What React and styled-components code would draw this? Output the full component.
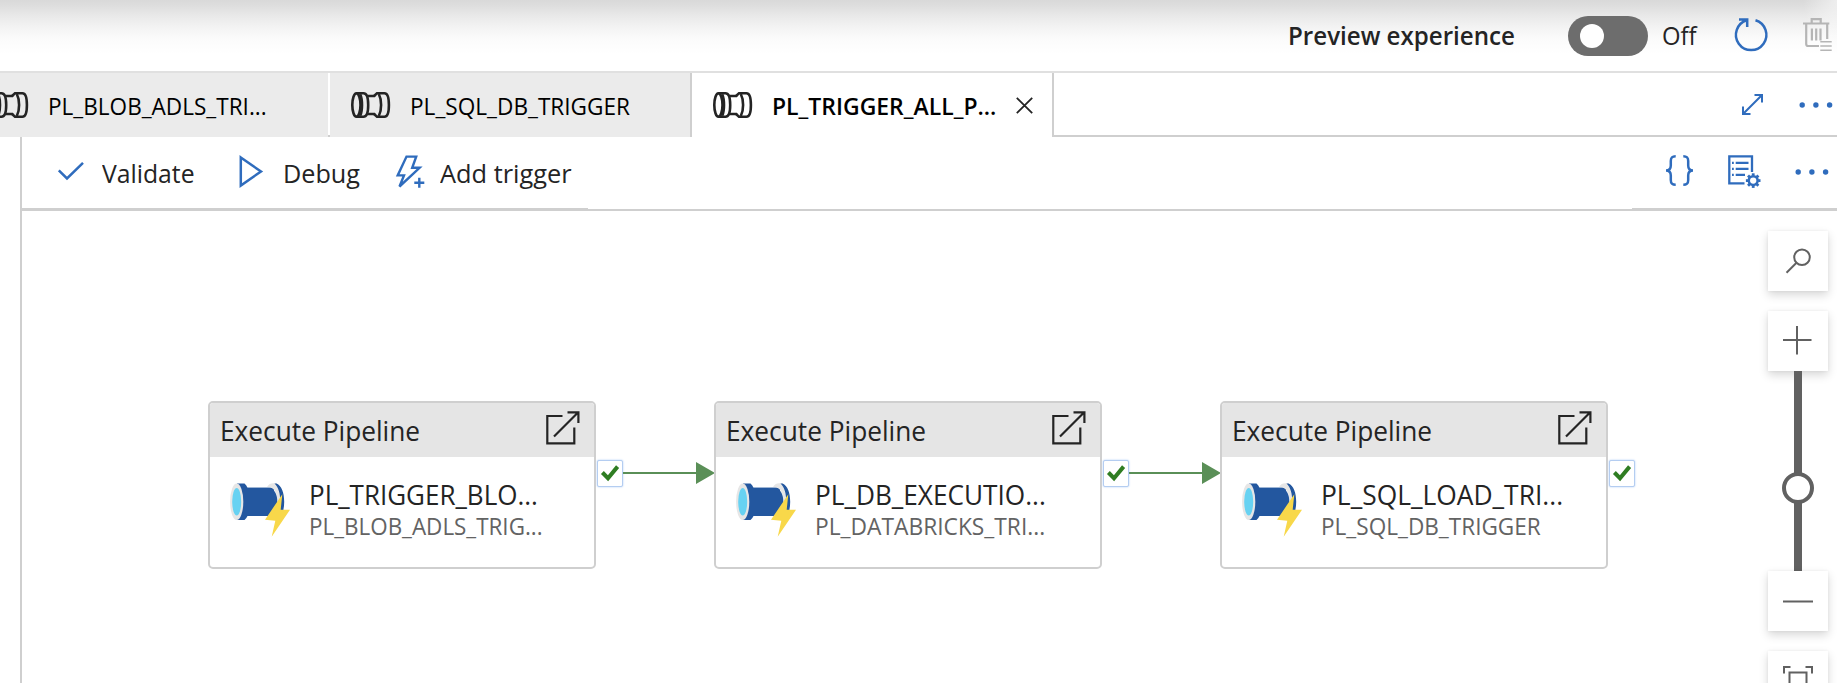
import React from "react";
import styled, { createGlobalStyle } from "styled-components";

const LINE = "#cfcfcf";
const BLUE = "#2f6cbd";
const INK = "#242424";
const GREY = "#616161";

const GlobalStyle = createGlobalStyle`
  *, *::before, *::after { box-sizing: border-box; }
  body { margin: 0; background: #fff; overflow: hidden; }
`;

const Page = styled.div`
  display: flex;
  flex-direction: column;
  width: 1837px;
  height: 683px;
  overflow: hidden;
  background: #fff;
  color: ${INK};
  font-family: "Open Sans", "Noto Sans", sans-serif;
`;

/* Text condensed horizontally; the box keeps an explicit width for layout. */
const Label = styled.span`
  display: block;
  flex: none;
  width: ${(p) => p.$width}px;
  margin: ${(p) => p.$m || 0};
  font-size: ${(p) => p.$size || 25.5}px;
  font-weight: ${(p) => p.$weight || 400};
  color: ${(p) => p.$color || INK};
  line-height: ${(p) => p.$line || 34}px;
  white-space: nowrap;
  transform: scaleX(${(p) => p.$fit || 0.96});
  transform-origin: 0 50%;
`;

const Icon = styled.svg`
  display: block;
  flex: none;
  width: ${(p) => p.$w}px;
  height: ${(p) => p.$h}px;
  margin: ${(p) => p.$m || 0};
  fill: none;
  stroke: ${(p) => p.$color || BLUE};
  stroke-width: ${(p) => p.$stroke || 2.2};
  overflow: visible;
`;

const SolidIcon = styled(Icon)`
  fill: ${(p) => p.$color || BLUE};
  stroke: none;
`;

const TopBar = styled.header`
  flex: none;
  display: flex;
  align-items: center;
  justify-content: flex-end;
  height: 73px;
  padding-right: 5px;
  border-bottom: 2px solid #e0e0e0;
  background:
    radial-gradient(ellipse 34px 44px at 100% 0, rgba(255, 255, 255, 0.55), rgba(255, 255, 255, 0)),
    linear-gradient(#d9d9d9 0, #dedede 6px, #e8e8e8 15px, #f3f3f3 27px, #fbfbfb 39px, #fff 54px);
`;

const Toggle = styled.span`
  flex: none;
  display: flex;
  align-items: center;
  width: 80px;
  height: 40px;
  margin: 1px 13.6px 0 0;
  padding-left: 12px;
  border-radius: 20px;
  background: #6d6d6d;
  &::before {
    content: "";
    width: 24px;
    height: 24px;
    border-radius: 50%;
    background: #fff;
  }
`;

const TabStrip = styled.nav`
  flex: none;
  display: flex;
  height: 64px;
  margin-left: -32px;
`;

const Tab = styled.div`
  flex: none;
  display: flex;
  align-items: center;
  width: 360px;
  padding-left: 21px;
  background: ${(p) => (p.$active ? "#fff" : "#ebebeb")};
`;

const TabDivider = styled.span`
  flex: none;
  width: 2px;
  background: ${(p) => (p.$light ? "#fff" : LINE)};
  border-bottom: 2px solid ${LINE};
`;

const TabActions = styled.div`
  flex: 1;
  display: flex;
  align-items: center;
  justify-content: flex-end;
  padding-right: 4px;
  border-bottom: 2px solid ${LINE};
`;

const Editor = styled.main`
  flex: 1;
  display: flex;
  flex-direction: column;
  margin-left: 20px;
  border-left: 2px solid ${LINE};
`;

const Toolbar = styled.div`
  flex: none;
  display: flex;
  justify-content: space-between;
  height: 74px;
  border-bottom: 2px solid ${LINE};
`;

const ToolGroup = styled.div`
  display: flex;
  align-items: center;
  width: ${(p) => p.$width}px;
  padding-left: ${(p) => p.$pad}px;
  border-bottom: 1px solid ${LINE};
`;

const Canvas = styled.section`
  position: relative;
  flex: 1;
  overflow: hidden;
`;

const Node = styled.div`
  position: absolute;
  left: ${(p) => p.$x}px;
  top: 190px;
  display: flex;
  align-items: flex-start;
`;

const Card = styled.article`
  width: 388px;
  height: 168px;
  overflow: hidden;
  border: 2px solid ${LINE};
  border-radius: 5px;
  background: #fff;
`;

const CardHead = styled.div`
  display: flex;
  justify-content: space-between;
  height: 54px;
  padding: 8px 14.5px 0 10px;
  background: #e5e5e5;
`;

const CardBody = styled.div`
  display: flex;
  padding: 19.5px 0 0 20px;
`;

const CardText = styled.div`
  padding-left: 19.2px;
`;

const Port = styled.span`
  display: flex;
  align-items: center;
  justify-content: center;
  width: 26px;
  height: 27px;
  margin: 58.5px 0 0 1px;
  border: 1.5px solid #b4cdf1;
  border-radius: 2px;
  background: #fff;
  box-shadow: 0 0 2px #a9c8f5;
`;

const ZoomPanel = styled.aside`
  position: absolute;
  top: 20px;
  right: 9px;
  display: flex;
  flex-direction: column;
  align-items: center;
`;

const ZoomButton = styled.button`
  flex: none;
  display: flex;
  align-items: center;
  justify-content: center;
  width: 60px;
  height: 60px;
  margin: 0 0 ${(p) => p.$gap || 0}px;
  padding: 0;
  border: 0;
  background: #fff;
  box-shadow: 0 4px 9px rgba(0, 0, 0, 0.16), 0 0 3px rgba(0, 0, 0, 0.06);
`;

const Track = styled.div`
  flex: none;
  display: flex;
  align-items: center;
  justify-content: center;
  width: 8px;
  height: 200px;
  background: ${GREY};
  &::before {
    content: "";
    flex: none;
    width: 32px;
    height: 32px;
    margin-top: 34px;
    border: 4px solid ${GREY};
    border-radius: 50%;
    background: #fff;
  }
`;

const PipeOutline = () => (
  <Icon $w={39} $h={26} $m="0 20px 0 0" $color={INK} $stroke={2.6} viewBox="0 0 39 26">
    <ellipse cx="5.4" cy="13" rx="4.1" ry="11.7" />
    <path d="M5.3 1.3H12.5C15.8 1.3 17.2 7 17.2 13s-1.4 11.7-4.7 11.7H5.3" />
    <path d="M9.2 2.2c1.2 2.6 1.8 6.4 1.8 10.8s-.6 8.2-1.8 10.8" />
    <path d="M15.6 4H24M15.6 22H24" />
    <path d="M23.5 4.8V3.6L26 1.3H33.5C36.6 1.3 37.9 7 37.9 13s-1.3 11.7-4.4 11.7H26L23.5 22.4V21.2" />
    <path d="M27.8 2c1.5 2.8 2.3 6.6 2.3 11s-.8 8.2-2.3 11" />
  </Icon>
);

const PipeColor = () => (
  <SolidIcon $w={60} $h={54} $m="6.5px 0 0" viewBox="0 0 60 54">
    <path d="M7 .4H14.5Q16.3 1.5 17.5 4.7H44V33H17.5Q16.3 35.8 14.5 36.9H7Z" fill="#23579f" />
    <path d="M37 3.7Q39.5.3 43 .3h3.5C51 3.5 52 10 52 18.7S50 34 46 36.9h-5C45.5 33 47.3 27 47.3 18.7S45 6 40.5 4.6Z" fill="#e6e6e6" />
    <path d="M44.5.4H46.5C51.5 2.5 54.2 9.5 54.2 18.7S51.5 35 46.5 36.9H44.5C48.5 33 50.3 27 50.3 18.7S48.5 4 44.5.4Z" fill="#23579f" />
    <path d="M17 4.7H40.5C45 7 47.3 12 47.3 18.7S45 30 42 33H17Z" fill="#23579f" />
    <ellipse cx="6.7" cy="18.7" rx="6.6" ry="18.3" fill="#e6e6e6" />
    <ellipse cx="6.7" cy="18.7" rx="4.5" ry="13.8" fill="#67d2f2" />
    <path d="M52.3 11.3L50.7 26.7H60L41.7 53.7L45.3 37.7L35 36.7Z" fill="#f8d84a" />
  </SolidIcon>
);

const OpenIcon = () => (
  <Icon $w={34} $h={34} $color={INK} $stroke={2.2} viewBox="0 0 34 34">
    <path d="M16.5 5H1.3V32.4H28.3V16.5M8 25.5L32 1.5M21.5 1.3H32.4V12" />
  </Icon>
);

const Dots = ({ m }) => (
  <SolidIcon $w={34} $h={6} $m={m} viewBox="0 0 34 6">
    <circle cx="3.2" cy="3" r="2.7" />
    <circle cx="16.9" cy="3" r="2.7" />
    <circle cx="30.6" cy="3" r="2.7" />
  </SolidIcon>
);

const Arrow = () => (
  <SolidIcon $w={92} $h={22} $m="61px 0 0" $color="#5a8f57" viewBox="0 0 92 22">
    <path d="M0 10H73V0L92 11L73 22V12H0Z" />
  </SolidIcon>
);

const tabs = [
  { text: "PL_BLOB_ADLS_TRI...", fit: 0.96 },
  { text: "PL_SQL_DB_TRIGGER", fit: 0.962 },
  { text: "PL_TRIGGER_ALL_P...", fit: 0.977, active: true },
];

const nodes = [
  { x: 186, name: "PL_TRIGGER_BLO...", fit: 0.945, sub: "PL_BLOB_ADLS_TRIG...", subFit: 0.954, linked: true },
  { x: 692, name: "PL_DB_EXECUTIO...", fit: 0.952, sub: "PL_DATABRICKS_TRI...", subFit: 0.969, linked: true },
  { x: 1198, name: "PL_SQL_LOAD_TRI...", fit: 0.959, sub: "PL_SQL_DB_TRIGGER", subFit: 0.961 },
];

const gearTeeth = [0, 45, 90, 135, 180, 225, 270, 315];

export default function App() {
  return (
    <Page>
      <GlobalStyle />
      <TopBar>
        <Label $width={280} $m="0 0 1px" $weight={600} $fit={0.946}>Preview experience</Label>
        <Toggle />
        <Label $width={71.4} $m="0 0 1px" $fit={0.935}>Off</Label>
        <Icon $w={36} $h={36} $m="0 34px 2px 0" $stroke={2.5} viewBox="0 0 36 36">
          <path d="M22.5 3.3A15.2 15.2 0 1 1 13.8 3.3M6 2.5H14.2V10" />
        </Icon>
        <Icon $w={29} $h={33} $m="0 0 2px" $color="#b5b5b5" $stroke={2.2} viewBox="0 0 29 33">
          <path d="M0 5.5H26.3M8.7 5V1.2H17.7V5M3.2 5.5V26Q3.2 28 5.2 28H16M24.2 5.5V21" />
          <path d="M8.9 10.5V22.5M13.2 10.5V22.5M17.5 10.5V22.5" />
          <path d="M17.3 23.7H28.7M17.3 28H28.7M17.3 32.2H28.7" strokeWidth="1.6" />
        </Icon>
      </TopBar>

      <TabStrip>
        {tabs.map((t, i) => (
          <React.Fragment key={t.text}>
            <Tab $active={t.active}>
              <PipeOutline />
              <Label
                $width={t.active ? 243.5 : 230}
                $m="2px 0 0"
                $size={23.5}
                $weight={t.active ? 600 : 400}
                $color="#000"
                $fit={t.fit}
              >
                {t.text}
              </Label>
              {t.active && (
                <Icon $w={17} $h={17} $color={INK} $stroke={1.8} viewBox="0 0 17 17">
                  <path d="M.8.8L16.2 16.2M16.2.8L.8 16.2" />
                </Icon>
              )}
            </Tab>
            <TabDivider $light={i === 0} />
          </React.Fragment>
        ))}
        <TabActions>
          <Icon $w={21} $h={21} $m="1px 36px 0 0" $stroke={2} viewBox="0 0 21 21">
            <path d="M1.5 19.5L19.5 1.5M12.5 1H20V8.5M1 12.5V20H8.5" />
          </Icon>
          <Dots m="2px 0 0" />
        </TabActions>
      </TabStrip>

      <Editor>
        <Toolbar>
          <ToolGroup $width={566} $pad={36}>
            <Icon $w={26} $h={18} $m="0 18px 4px 0" $stroke={2.5} viewBox="0 0 26 18">
              <path d="M.8 8.3L9 16.5L25 .8" />
            </Icon>
            <Label $width={137} $fit={0.97}>Validate</Label>
            <Icon $w={24} $h={33} $m="0 19.5px 2px 0" $stroke={2.5} viewBox="0 0 24 33">
              <path d="M1.8 2.5L22 16.5L1.8 30.5Z" />
            </Icon>
            <Label $width={113.5} $fit={0.988}>Debug</Label>
            <Icon $w={29} $h={33} $m="0 15px 2px 0" $stroke={2.4} viewBox="0 0 29 33">
              <path d="M10.5 1.6H20.2L16.2 12.8H23.6L3.5 31.5L8 20.4H1.7Z" />
              <path d="M18.3 27.8H28.3M23.3 22.8V32.8" />
            </Icon>
            <Label $width={140} $fit={0.994}>Add trigger</Label>
          </ToolGroup>
          <ToolGroup $width={205} $pad={33}>
            <Icon $w={29} $h={31} $m="0 33.5px 4px 0" $stroke={2.5} viewBox="0 0 29 31">
              <path d="M10.7 1.2C7 1.2 5.8 2.5 5.8 6V10.5C5.8 13.8 4.5 15.5 1 15.5C4.5 15.5 5.8 17.2 5.8 20.5V25C5.8 28.5 7 29.8 10.7 29.8" />
              <path d="M18.3 1.2C22 1.2 23.2 2.5 23.2 6V10.5C23.2 13.8 24.5 15.5 28 15.5C24.5 15.5 23.2 17.2 23.2 20.5V25C23.2 28.5 22 29.8 18.3 29.8" />
            </Icon>
            <Icon $w={33} $h={33} $m="0 34.5px 2px 0" $stroke={2.3} viewBox="0 0 33 33">
              <path d="M24 17V1.4H1.3V28.3H16.5M7.7 7.8H20.5M7.7 13.8H20.5M7.7 19.8H17M4 7.8H5.8M4 13.8H5.8M4 19.8H5.8" />
              <circle cx="25.2" cy="25.6" r="4.4" strokeWidth="2.5" />
              {gearTeeth.map((a) => (
                <path key={a} d="M25.2 20.7V18.3" strokeWidth="2.8" transform={`rotate(${a} 25.2 25.6)`} />
              ))}
            </Icon>
            <Dots m="0 0 1px" />
          </ToolGroup>
        </Toolbar>

        <Canvas>
          {nodes.map((n) => (
            <Node key={n.x} $x={n.x}>
              <Card>
                <CardHead>
                  <Label $width={215} $m="3px 0 0" $size={27.5} $fit={0.955}>Execute Pipeline</Label>
                  <OpenIcon />
                </CardHead>
                <CardBody>
                  <PipeColor />
                  <CardText>
                    <Label $width={240} $size={27.5} $line={36} $fit={n.fit}>{n.name}</Label>
                    <Label $width={240} $size={23.5} $line={26} $color="#636363" $fit={n.subFit}>{n.sub}</Label>
                  </CardText>
                </CardBody>
              </Card>
              <Port>
                <Icon $w={18} $h={16} $color="#2f7d22" $stroke={4} viewBox="0 0 18 16">
                  <path d="M1.4 7.5L7 13.2L16.6 1.6" />
                </Icon>
              </Port>
              {n.linked && <Arrow />}
            </Node>
          ))}

          <ZoomPanel>
            <ZoomButton $gap={20}>
              <Icon $w={26} $h={26} $color={GREY} $stroke={2} viewBox="0 0 26 26">
                <circle cx="17" cy="9.2" r="7.8" />
                <path d="M11.5 14.7L1.5 24.7" />
              </Icon>
            </ZoomButton>
            <ZoomButton>
              <Icon $w={30} $h={30} $color={GREY} $stroke={2} viewBox="0 0 30 30">
                <path d="M0 14H28.5M14 0V28.5" />
              </Icon>
            </ZoomButton>
            <Track />
            <ZoomButton $gap={20}>
              <Icon $w={30} $h={30} $color={GREY} $stroke={2} viewBox="0 0 30 30">
                <path d="M0 15.5H30" />
              </Icon>
            </ZoomButton>
            <ZoomButton>
              <Icon $w={30} $h={30} $color={GREY} $stroke={2} viewBox="0 0 30 30">
                <path d="M1 7.5V1H7.5M22.5 1H29V7.5M1 22.5V29H7.5M22.5 29H29V22.5M6.5 6.5H23.5V23.5H6.5Z" />
              </Icon>
            </ZoomButton>
          </ZoomPanel>
        </Canvas>
      </Editor>
    </Page>
  );
}
